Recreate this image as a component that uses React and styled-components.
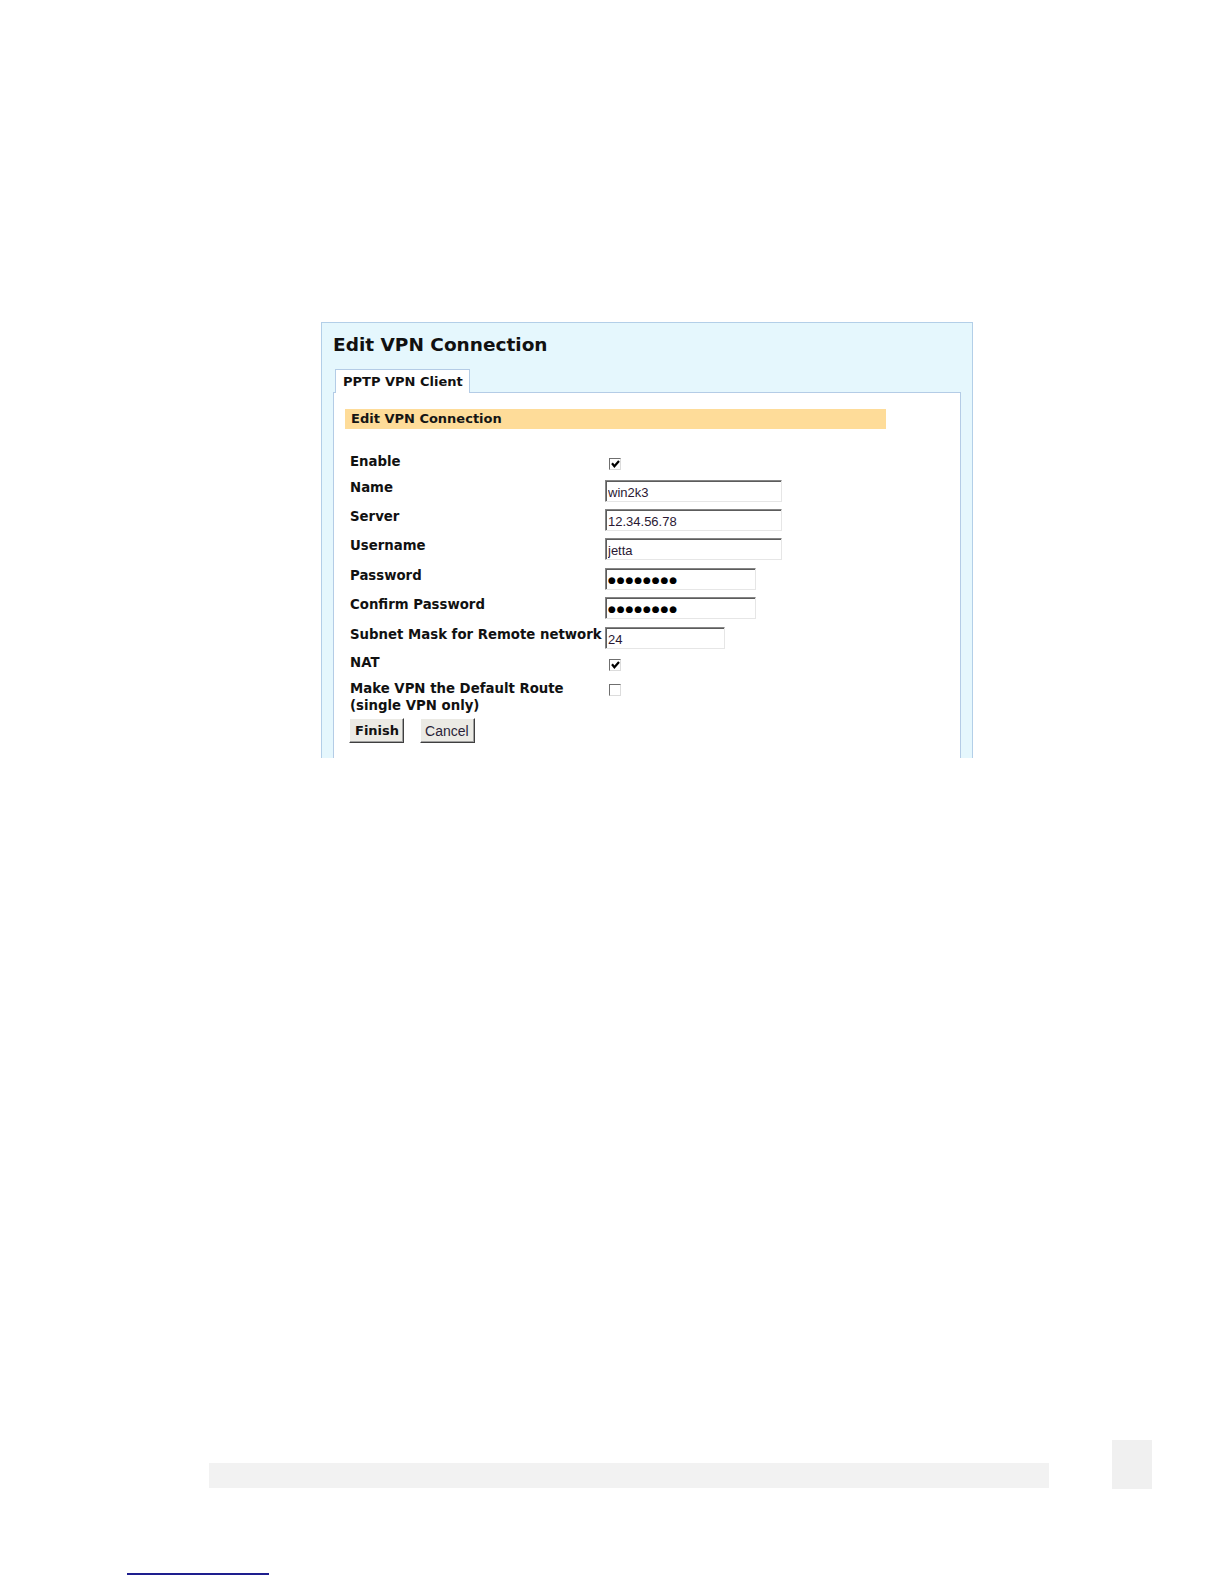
import React from "react";
import styled, { createGlobalStyle } from "styled-components";

const GlobalStyle = createGlobalStyle`
  html, body {
    margin: 0;
    padding: 0;
    background: #ffffff;
  }
  body {
    font-family: "DejaVu Sans", Verdana, sans-serif;
    color: #111;
  }
`;

const Page = styled.div`
  width: 1224px;
  min-height: 1584px;
  padding-top: 322px;
  box-sizing: border-box;
`;

const Frame = styled.div`
  margin-left: 321px;
  width: 652px;
  height: 436px;
  box-sizing: border-box;
  background: #e5f7fd;
  border: 1px solid #b3cfe8;
  border-bottom: none;
  padding: 11px 11px 0 11px;
  overflow: hidden;
`;

const Title = styled.h1`
  margin: 0;
  font: bold 18.5px/22px "DejaVu Sans", Verdana, sans-serif;
  color: #111;
`;

const TabStrip = styled.div`
  display: flex;
  align-items: stretch;
  margin-top: 13px;
`;

const TabGap = styled.div`
  width: ${(p) => p.$w || "auto"};
  flex: ${(p) => (p.$fill ? "1" : "none")};
  border-bottom: 1px solid #b4cce6;
`;

const Tab = styled.div`
  background: #fff;
  border: 1px solid #b4cce6;
  border-bottom: none;
  padding: 4px 6px 4px 7px;
  font: bold 13px/15px "DejaVu Sans", Verdana, sans-serif;
  color: #111;
`;

const Panel = styled.div`
  background: #fff;
  border: 1px solid #b4cce6;
  border-top: none;
  padding: 16px 0 40px 11px;
`;

const SectionBar = styled.div`
  width: 541px;
  height: 20px;
  background: #fedc99;
  padding-left: 6px;
  box-sizing: border-box;
  font: bold 13px/20px "DejaVu Sans", Verdana, sans-serif;
  color: #151515;
`;

const Form = styled.div`
  display: grid;
  grid-template-columns: 255px 1fr;
  grid-template-rows: 26px 29px 29px 30px 29px 30px 28px 25px 38px auto;
  margin-top: 25px;
  padding-left: 5px;
`;

const Label = styled.div`
  font: bold 13.3px/${(p) => (p.$tall ? "17px" : "15px")} "DejaVu Sans", Verdana, sans-serif;
  color: #111;
  white-space: nowrap;
`;

const Field = styled.div`
  display: flex;
  align-items: flex-start;
`;

const TextInput = styled.input`
  width: ${(p) => p.$w}px;
  height: 22px;
  box-sizing: border-box;
  margin: 0;
  padding: ${(p) => (p.$dots ? "2px 1px 0 2px" : "3px 1px 0 2px")};
  border: 1px solid;
  border-color: #858585 #e6e6e6 #e6e6e6 #858585;
  box-shadow: inset 1px 1px 0 #5c5c5c;
  background: #fff;
  outline: none;
  font: ${(p) => (p.$dots ? "9px 'DejaVu Sans'" : "13px 'Liberation Sans'")}, Arial, sans-serif;
  letter-spacing: ${(p) => (p.$dots ? "0.9px" : "0")};
  color: ${(p) => (p.$dots ? "#000" : "#2a1833")};
`;

const Check = styled.span`
  display: inline-flex;
  align-items: center;
  justify-content: center;
  width: 12px;
  height: 12px;
  box-sizing: border-box;
  margin: 4px 0 0 4px;
  border: 1px solid;
  border-color: #6f6f6f #dcdcdc #dcdcdc #6f6f6f;
  background: #fff;
`;

const Buttons = styled.div`
  grid-column: 1 / 3;
  display: flex;
  gap: 16px;
  margin-left: -1px;
`;

const Button = styled.button`
  height: 25px;
  box-sizing: border-box;
  margin: 0;
  padding: ${(p) => (p.$primary ? "0 4px 0 5px" : "0 5px 0 4px")};
  background: #ebeae4;
  border: 1px solid;
  border-color: #ffffff #3f3f3f #3f3f3f #ffffff;
  box-shadow: inset -1px -1px 0 #a0a0a0;
  font: ${(p) =>
    p.$primary
      ? "bold 13px 'DejaVu Sans', Verdana, sans-serif"
      : "14px 'Liberation Sans', Arial, sans-serif"};
  color: ${(p) => (p.$primary ? "#111" : "#2a1f38")};
  cursor: pointer;
`;

const Footer = styled.div`
  display: flex;
  align-items: flex-end;
  margin-top: 682px;
`;

const FooterBar = styled.div`
  margin-left: 209px;
  margin-bottom: 1px;
  width: 840px;
  height: 25px;
  background: #f2f2f2;
`;

const FooterBox = styled.div`
  margin-left: 63px;
  width: 40px;
  height: 49px;
  background: #f0f0f0;
`;

const LinkRule = styled.div`
  margin: 84px 0 0 127px;
  width: 142px;
  height: 2px;
  background: #1e1e8e;
`;

function Tick({ checked }) {
  return (
    <Check>
      {checked && (
        <svg width="9" height="8" viewBox="0 0 9 8">
          <path d="M1 3.2 L3.4 6.2 L8 1" fill="none" stroke="#000" strokeWidth="2.2" />
        </svg>
      )}
    </Check>
  );
}

const fields = [
  { label: "Name", value: "win2k3", w: 177 },
  { label: "Server", value: "12.34.56.78", w: 177 },
  { label: "Username", value: "jetta", w: 177 },
  { label: "Password", value: "●●●●●●●●", w: 151, dots: true },
  { label: "Confirm Password", value: "●●●●●●●●", w: 151, dots: true },
  { label: "Subnet Mask for Remote network", value: "24", w: 120 },
];

export default function App() {
  return (
    <>
      <GlobalStyle />
      <Page>
        <Frame>
          <Title>Edit VPN Connection</Title>
          <TabStrip>
            <TabGap $w="2px" />
            <Tab>PPTP VPN Client</Tab>
            <TabGap $fill />
          </TabStrip>
          <Panel>
            <SectionBar>Edit VPN Connection</SectionBar>
            <Form>
              <Label>Enable</Label>
              <Field>
                <Tick checked />
              </Field>
              {fields.map((f) => (
                <React.Fragment key={f.label}>
                  <Label>{f.label}</Label>
                  <Field>
                    <TextInput readOnly $w={f.w} $dots={f.dots} defaultValue={f.value} />
                  </Field>
                </React.Fragment>
              ))}
              <Label>NAT</Label>
              <Field>
                <Tick checked />
              </Field>
              <Label $tall>
                Make VPN the Default Route
                <br />
                (single VPN only)
              </Label>
              <Field>
                <Tick />
              </Field>
              <Buttons>
                <Button $primary>Finish</Button>
                <Button>Cancel</Button>
              </Buttons>
            </Form>
          </Panel>
        </Frame>
        <Footer>
          <FooterBar />
          <FooterBox />
        </Footer>
        <LinkRule />
      </Page>
    </>
  );
}
